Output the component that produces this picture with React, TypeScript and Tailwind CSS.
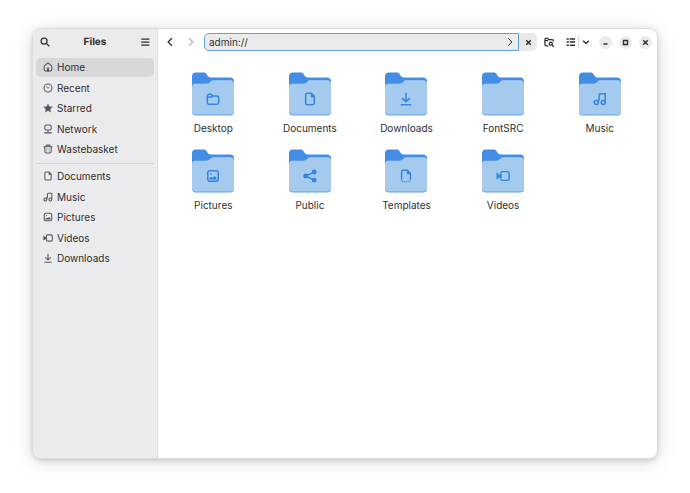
import { useState, type ReactNode } from "react";

type IconName =
  | "home"
  | "recent"
  | "starred"
  | "network"
  | "trash"
  | "documents"
  | "music"
  | "pictures"
  | "videos"
  | "downloads"
  | "desktop"
  | "public"
  | "templates";

const glyphs: Record<IconName, ReactNode> = {
  home: (
    <>
      <path d="M2 7.200a2 2 0 0 1 .7-1.500L8 1.500l5.300 4.200a2 2 0 0 1 .7 1.500V12.500a2 2 0 0 1-2 2H4a2 2 0 0 1-2-2z" />
      <path d="M6.300 15v-4.500a1.700 1.700 0 0 1 3.400 0V15z" fill="currentColor" stroke="none" />
    </>
  ),
  recent: (
    <>
      <circle cx="8" cy="8" r="6.400" />
      <path d="M5 5.800 8 8.300 10.300 6.500" strokeWidth="1.300" />
    </>
  ),
  starred: (
    <path
      d="M8 .6l2.200 5 5.500.5-4.100 3.700 1.200 5.500L8 12.400l-4.800 2.900 1.200-5.500L.3 6.100l5.500-.5z"
      fill="currentColor"
      stroke="none"
    />
  ),
  network: (
    <>
      <rect x="3" y="1.500" width="10" height="8" rx="2" />
      <path d="M8 9.500V14M2 14.200h12" />
    </>
  ),
  trash: (
    <>
      <path d="M1 4.500h14M5 4V2.800a1 1 0 0 1 1-1h4a1 1 0 0 1 1 1V4M2.600 5l.6 7.500a2 2 0 0 0 2 1.900h5.600a2 2 0 0 0 2-1.900l.6-7.500" />
      <path d="M5.500 8h1.300M9.200 8h1.300M5.500 11h1.300M9.200 11h1.300" strokeWidth="1.200" />
    </>
  ),
  documents: (
    <>
      <path d="M3 3.500A2 2 0 0 1 5 1.500h4.500L13 5v7.500a2 2 0 0 1-2 2H5a2 2 0 0 1-2-2z" />
      <path d="M9 1.500h1L13 5v1H9z" fill="currentColor" stroke="none" />
    </>
  ),
  music: (
    <>
      <circle cx="3.700" cy="12" r="2.300" />
      <circle cx="11.700" cy="12" r="2.300" />
      <path d="M6 12V8.500M7 10V4a2 2 0 0 1 2-2h5v10" />
    </>
  ),
  pictures: (
    <>
      <rect x="2" y="2" width="12" height="12" rx="2.500" />
      <path d="M4 12V10l2-1 1.500 1L10 8l2 2v2z" fill="currentColor" stroke="none" />
      <circle cx="5.700" cy="5.700" r="1" fill="currentColor" stroke="none" />
    </>
  ),
  videos: (
    <>
      <rect x="5.500" y="3" width="9.500" height="10" rx="2" />
      <path d="M.5 4 5 7v2L.5 12z" fill="currentColor" stroke="none" />
    </>
  ),
  downloads: <path d="M8 1v10M3.500 7l4.500 4L12.500 7M2 14.700h12" />,
  desktop: (
    <path d="M1.500 4.500a2 2 0 0 1 2-2H6L7.500 4.500h5a2 2 0 0 1 2 2V12a2 2 0 0 1-2 2h-9a2 2 0 0 1-2-2zM1.500 5.700h5L7.800 4.600" />
  ),
  public: (
    <>
      <path d="M13 3.500 3 8l10 4.800" />
      <circle cx="3" cy="8" r="1.900" fill="currentColor" />
      <circle cx="12.800" cy="3.400" r="1.900" fill="currentColor" />
      <circle cx="12.800" cy="12.800" r="1.900" fill="currentColor" />
    </>
  ),
  templates: (
    <>
      <path d="M3 12V3.500a2 2 0 0 1 2-2h4.500L13 5v7" />
      <path d="M3 12v.5a2 2 0 0 0 2 2h6a2 2 0 0 0 2-2V12" strokeWidth="1.200" strokeDasharray="1.200 .8" />
      <path d="M9 1.500h1L13 5v1H9z" fill="currentColor" stroke="none" />
    </>
  ),
};

const Glyph = ({ name, className }: { name: IconName; className: string }) => (
  <svg
    viewBox="0 0 16 16"
    className={className}
    fill="none"
    stroke="currentColor"
    strokeWidth="1.7"
    strokeLinejoin="round"
    aria-hidden="true"
  >
    {glyphs[name]}
  </svg>
);

interface Place {
  label: string;
  icon: IconName;
}

const places: Place[] = [
  { label: "Home", icon: "home" },
  { label: "Recent", icon: "recent" },
  { label: "Starred", icon: "starred" },
  { label: "Network", icon: "network" },
  { label: "Wastebasket", icon: "trash" },
];

const bookmarks: Place[] = [
  { label: "Documents", icon: "documents" },
  { label: "Music", icon: "music" },
  { label: "Pictures", icon: "pictures" },
  { label: "Videos", icon: "videos" },
  { label: "Downloads", icon: "downloads" },
];

const folders: { label: string; icon?: IconName }[] = [
  { label: "Desktop", icon: "desktop" },
  { label: "Documents", icon: "documents" },
  { label: "Downloads", icon: "downloads" },
  { label: "FontSRC" },
  { label: "Music", icon: "music" },
  { label: "Pictures", icon: "pictures" },
  { label: "Public", icon: "public" },
  { label: "Templates", icon: "templates" },
  { label: "Videos", icon: "videos" },
];

const PlaceList = ({
  items,
  active,
  onSelect,
}: {
  items: Place[];
  active: string;
  onSelect: (label: string) => void;
}) => (
  <ul className="flex h-[101px] flex-col justify-between">
    {items.map((item) => (
      <li key={item.label}>
        <button
          type="button"
          onClick={() => onSelect(item.label)}
          className={`flex h-[19px] w-full items-center gap-1 rounded-[5px] px-[7px] pb-px ${
            active === item.label ? "bg-[#d7d7d8]" : ""
          }`}
        >
          <Glyph name={item.icon} className="size-[10px] text-[#59595b]" />
          {item.label}
        </button>
      </li>
    ))}
  </ul>
);

const Folder = ({ label, icon }: { label: string; icon?: IconName }) => (
  <button type="button" className="flex flex-col items-center gap-1">
    <span className="relative">
      <svg viewBox="0 0 43 44" className="h-[44px] w-[42px]" aria-hidden="true">
        <path
          d="M0 4a4 4 0 0 1 4-4h8c1.500 0 2.300.6 3 1.700l1.200 1.900C17 4.700 17.700 5 19 5h20a4 4 0 0 1 4 4v31H0z"
          fill="#438de6"
        />
        <path
          d="M0 15a3.500 3.500 0 0 1 3.500-3.500H15c1.300 0 2-.4 2.900-1.200l1.300-1.200C20.100 8.300 21 8 22.500 8H39a4 4 0 0 1 4 4v28a4 4 0 0 1-4 4H4a4 4 0 0 1-4-4z"
          fill="#62a0ea"
        />
        <path
          d="M0 15a3.500 3.500 0 0 1 3.500-3.500H15c1.300 0 2-.4 2.900-1.200l1.300-1.200C20.100 8.300 21 8 22.500 8H39a4 4 0 0 1 4 4v27a4 4 0 0 1-4 4H4a4 4 0 0 1-4-4z"
          fill="#a4caee"
        />
      </svg>
      {icon && (
        <Glyph name={icon} className="absolute inset-x-0 top-5 mx-auto size-[14px] text-[#3584e4]" />
      )}
    </span>
    <span>{label}</span>
  </button>
);

const HeaderIcon = ({ label, children }: { label: string; children: ReactNode }) => (
  <button type="button" aria-label={label} className="flex shrink-0 items-center justify-center">
    <svg
      viewBox="0 0 16 16"
      className="size-[10px]"
      fill="none"
      stroke="currentColor"
      strokeWidth="2"
      aria-hidden="true"
    >
      {children}
    </svg>
  </button>
);

const WindowButton = ({ label, children }: { label: string; children: ReactNode }) => (
  <button
    type="button"
    aria-label={label}
    className="flex size-[13px] items-center justify-center rounded-full bg-[#ebebeb]"
  >
    <svg viewBox="0 0 7 7" className="size-[7px]" fill="none" stroke="currentColor" strokeWidth="1.4">
      {children}
    </svg>
  </button>
);

const App = () => {
  const [active, setActive] = useState("Home");
  const [path, setPath] = useState("admin://");

  return (
    <div className="flex min-h-screen bg-white pt-[29px] pr-[33px] pb-[35px] pl-[33px] font-[Inter,sans-serif] text-[10px] leading-4 text-[#2e2e30] [text-rendering:geometricPrecision]">
      <div className="flex flex-1 overflow-hidden rounded-lg bg-white shadow-[0_0_0_1px_#dedede,0_2px_6px_rgba(0,0,0,0.2),0_3px_22px_rgba(0,0,0,0.13)]">
        <aside className="w-[125px] shrink-0 border-r border-[#e0e0e2] bg-[#ebebed]">
          <header className="flex h-[26px] items-center justify-between px-[7px]">
            <HeaderIcon label="Search">
              <circle cx="6.500" cy="6.500" r="4.800" />
              <path d="M10 10l5 5" />
            </HeaderIcon>
            <h1 className="font-bold">Files</h1>
            <HeaderIcon label="Main menu">
              <path d="M2 3.200h13M2 8h13M2 12.800h13" />
            </HeaderIcon>
          </header>
          <nav className="px-[3px] pt-[3px]">
            <PlaceList items={places} active={active} onSelect={setActive} />
            <hr className="mt-1 mb-[3px] border-[#d3d3d5]" />
            <PlaceList items={bookmarks} active={active} onSelect={setActive} />
          </nav>
        </aside>

        <main className="min-w-0 flex-1">
          <header className="flex h-[26px] items-center pr-[5px] pl-[7px]">
            <div className="flex gap-[11px]">
              <HeaderIcon label="Back">
                <path d="M11 2 5 8l6 6" />
              </HeaderIcon>
              <span className="flex text-[#b5b5b5]">
                <HeaderIcon label="Forward">
                  <path d="M5 2l6 6-6 6" />
                </HeaderIcon>
              </span>
            </div>
            <div className="ml-2 flex h-[18px] min-w-0 flex-1">
              <div className="flex min-w-0 flex-1 items-center rounded-l-[5px] border border-[#62a0e0] bg-[#ebebeb] pr-[3px] pl-1">
                <input
                  aria-label="Location"
                  value={path}
                  onChange={(e) => setPath(e.target.value)}
                  autoFocus
                  className="min-w-0 flex-1 bg-transparent outline-none"
                />
                <HeaderIcon label="Go">
                  <path d="M5 2l6 6-6 6" strokeWidth="1.600" />
                </HeaderIcon>
              </div>
              <button
                type="button"
                aria-label="Clear location"
                className="flex w-[18px] items-center justify-center rounded-r-[5px] bg-[#e9e9e9]"
              >
                <svg viewBox="0 0 7 7" className="size-[7px]" stroke="currentColor" strokeWidth="1.4">
                  <path d="M1.200 1.200l4.600 4.600M5.800 1.200 1.200 5.800" />
                </svg>
              </button>
            </div>
            <div className="ml-[7px] flex items-center">
              <HeaderIcon label="Search current folder">
                <path d="M7 14H3.500A2 2 0 0 1 1.500 12V4a2 2 0 0 1 2-2H6l1.500 2H13a2 2 0 0 1 2 2v1M1.500 5.800h5" />
                <circle cx="10.800" cy="10.500" r="2.500" />
                <path d="M12.800 12.500 15.500 15.500" />
              </HeaderIcon>
              <div className="ml-3 flex items-center gap-[2px]">
                <HeaderIcon label="View mode">
                  <path d="M1 3h3.500M1 8h3.500M1 13h3.500M6 3h8.500M6 8h8.500M6 13h8.500" strokeWidth="2.400" />
                </HeaderIcon>
                <span className="h-3 w-px bg-[#dddddd]" />
                <HeaderIcon label="View options">
                  <path d="M3.500 6 8 10.500 12.500 6" />
                </HeaderIcon>
              </div>
            </div>
            <div className="ml-2 flex gap-[7px]">
              <WindowButton label="Minimise">
                <path d="M1.500 5h4" />
              </WindowButton>
              <WindowButton label="Maximise">
                <path d="M1.500 1.500h4v4h-4z" />
              </WindowButton>
              <WindowButton label="Close">
                <path d="M1.200 1.200l4.600 4.600M5.800 1.200 1.200 5.800" />
              </WindowButton>
            </div>
          </header>
          <section className="grid grid-cols-5 gap-y-[13px] pt-[17px] pr-[9px] pl-[7px]">
            {folders.map((folder) => (
              <Folder key={folder.label} label={folder.label} icon={folder.icon} />
            ))}
          </section>
        </main>
      </div>
    </div>
  );
};

export default App;
